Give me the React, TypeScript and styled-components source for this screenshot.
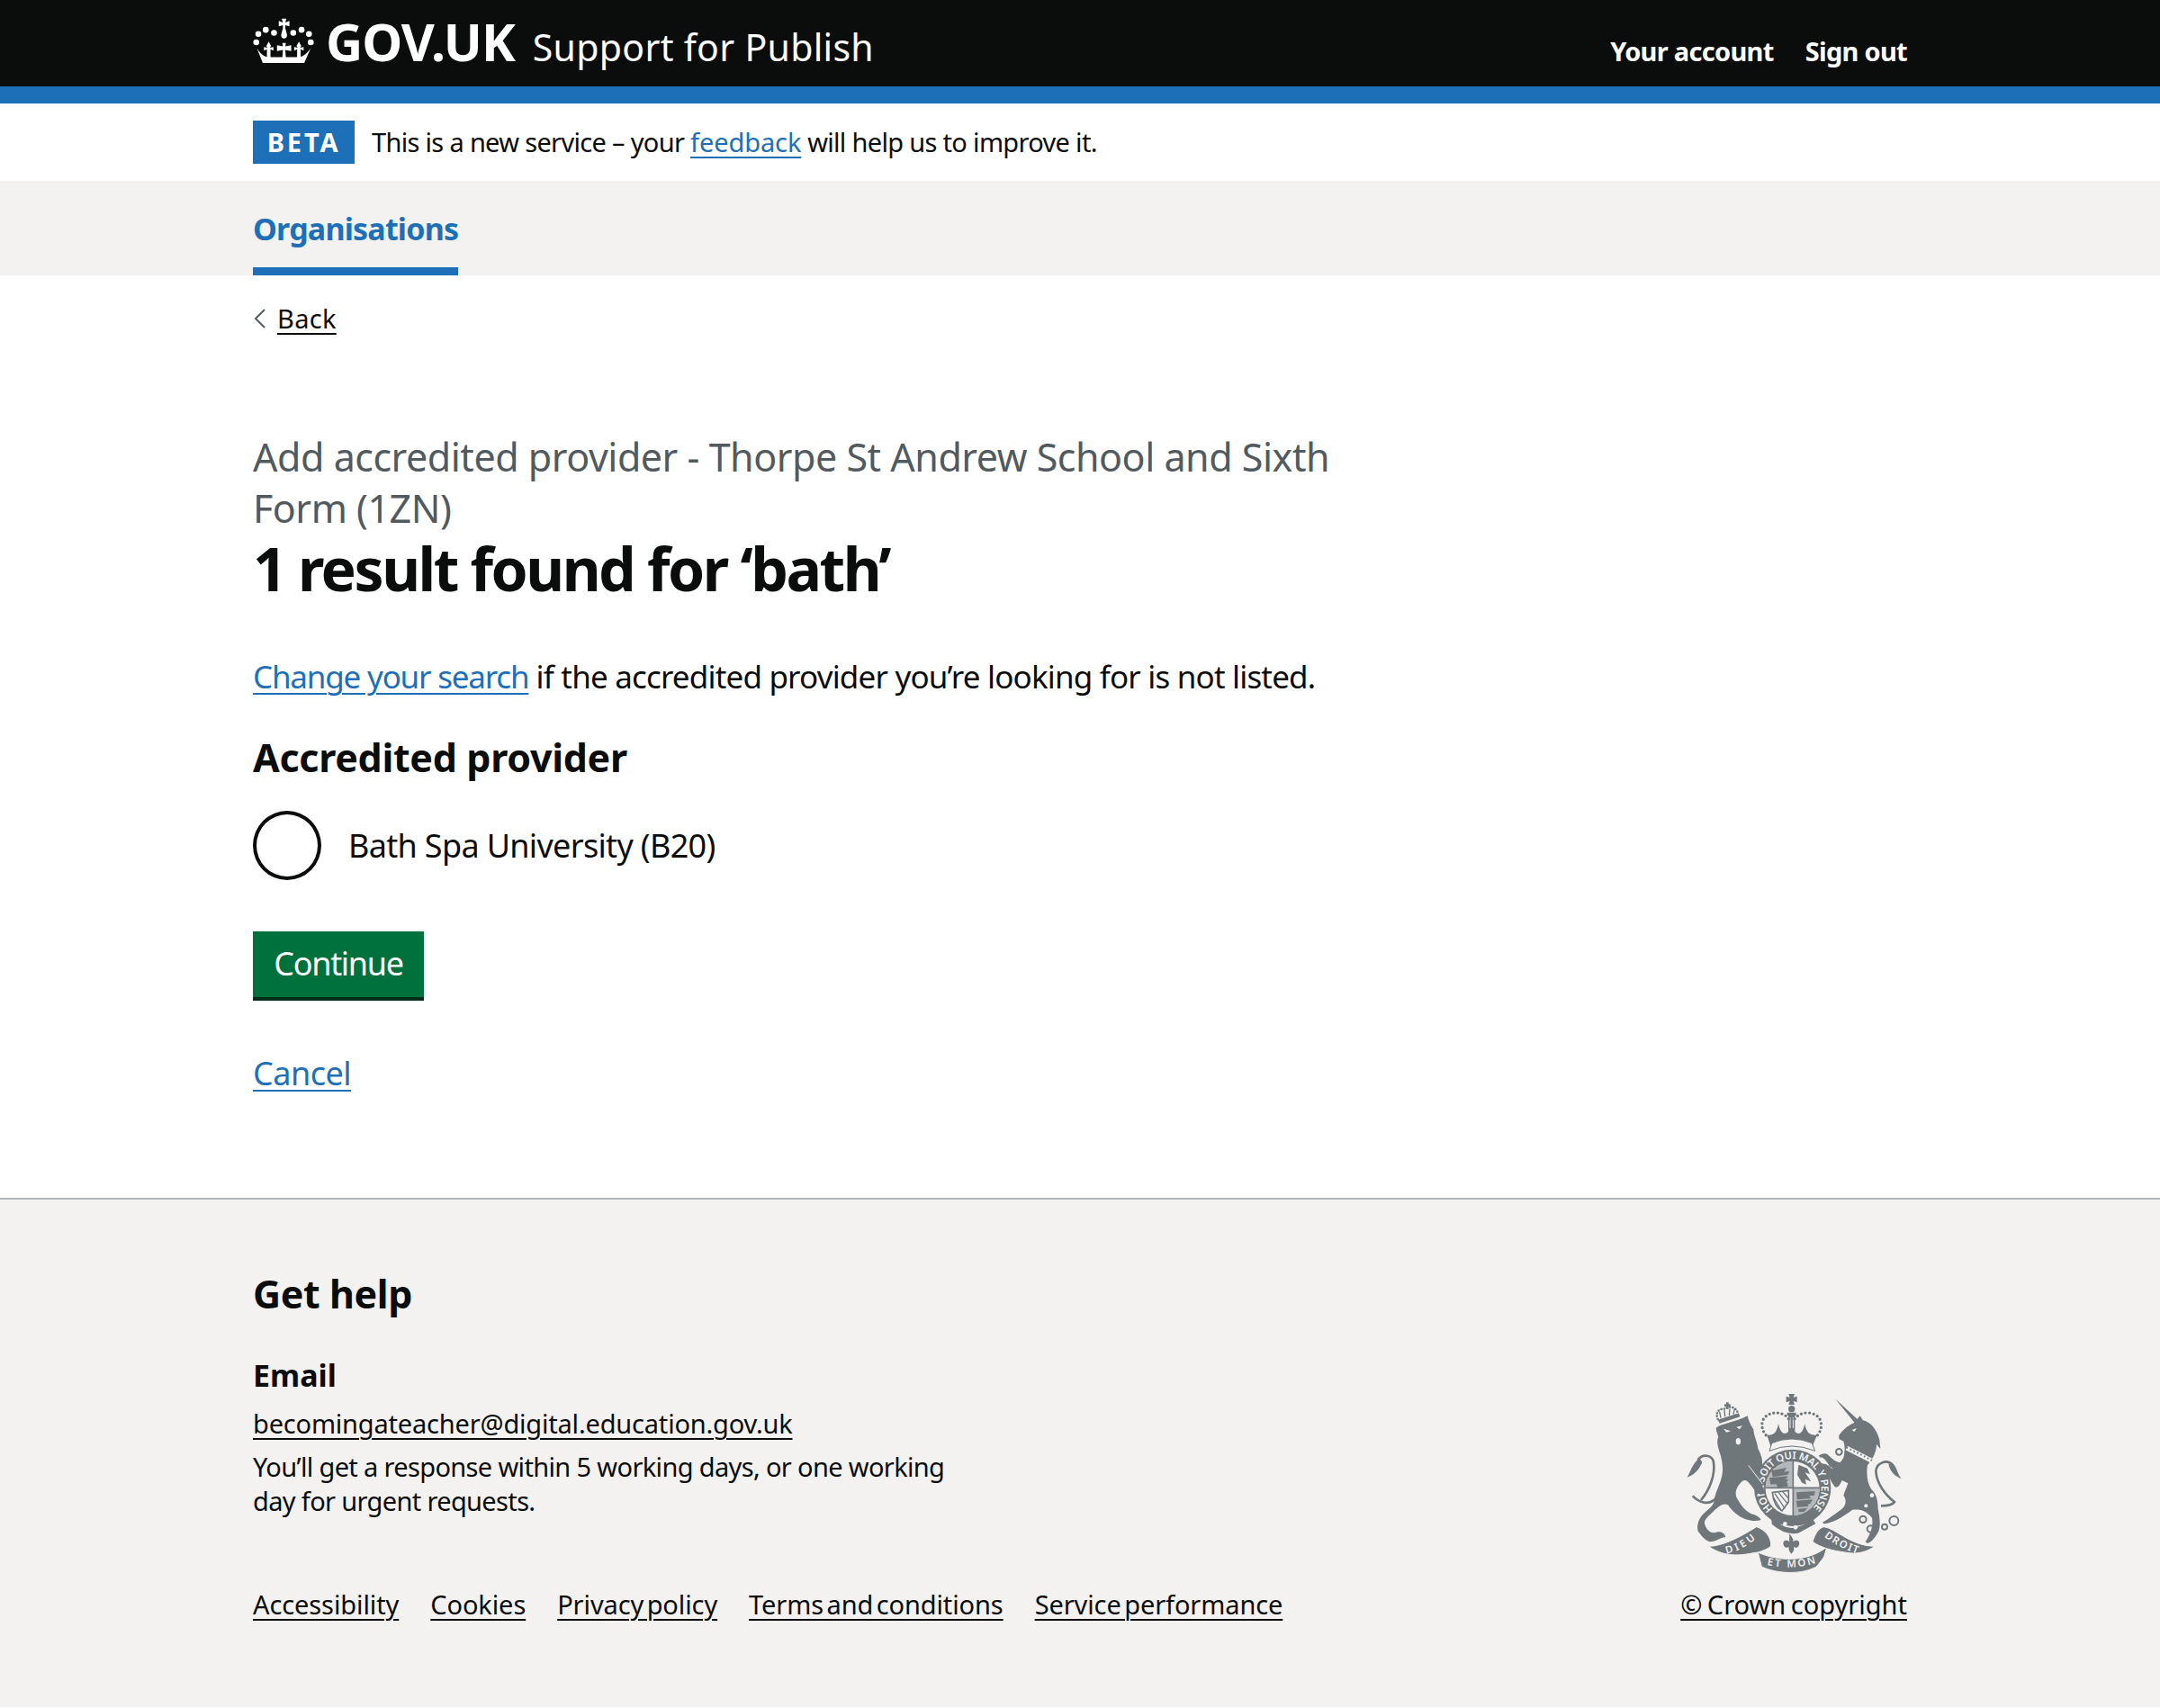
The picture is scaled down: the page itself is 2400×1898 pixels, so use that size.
import styled, { createGlobalStyle } from 'styled-components';

const GlobalStyle = createGlobalStyle`
    html, body { margin: 0; padding: 0; background: #fff; }
    body {
        font-family: "Noto Sans", "Liberation Sans", Arial, sans-serif;
        color: #0b0c0c;
    }
`;

const Container = styled.div`
    width: 1838px;
    margin: 0 auto;
`;

const Header = styled.header`
    background: #0b0c0c;
    border-bottom: 19px solid #1d70b8;
    height: 96px;
`;
const HeaderRow = styled(Container)`
    display: flex;
    justify-content: space-between;
    height: 96px;
`;
const Brand = styled.a`
    display: flex;
    align-items: flex-start;
    color: #fff;
    text-decoration: none;
`;
const CrownIcon = styled.svg`
    width: 69px;
    height: 50px;
    margin: 20px 12px 0 0;
`;
const Logotype = styled.span`
    font-size: 57px;
    font-weight: 700;
    line-height: 96px;
    letter-spacing: -1px;
    margin-top: -2px;
`;
const ServiceName = styled.span`
    font-size: 41px;
    line-height: 96px;
    letter-spacing: 0.3px;
    margin-left: 20px;
    margin-top: 4px;
`;
const AccountNav = styled.nav`
    display: flex;
    gap: 35px;
    padding-top: 35px;
`;
const AccountLink = styled.a`
    color: #fff;
    font-size: 29px;
    font-weight: 700;
    line-height: 44px;
    letter-spacing: -0.7px;
    text-decoration: none;
`;

const BetaRow = styled(Container)`
    display: flex;
    align-items: center;
    gap: 19px;
    height: 86px;
`;
const BetaTag = styled.strong`
    width: 113px;
    height: 48px;
    background: #1d70b8;
    color: #fff;
    font-size: 29px;
    font-weight: 700;
    line-height: 48px;
    letter-spacing: 2.8px;
    text-align: center;
`;
const BetaText = styled.span`
    font-size: 29px;
    line-height: 44px;
    letter-spacing: -0.68px;
`;
const BlueLink = styled.a`
    color: #1d70b8;
    text-decoration: underline;
    text-decoration-thickness: 2px;
    text-underline-offset: 5px;
`;
const FeedbackLink = styled(BlueLink)`
    letter-spacing: -0.1px;
`;
const SearchLink = styled(BlueLink)`
    letter-spacing: -1.2px;
`;

const SubNav = styled.nav`
    background: #f3f2f1;
    height: 105px;
`;
const SubNavItem = styled.a`
    display: inline-block;
    box-sizing: border-box;
    height: 105px;
    padding-top: 30px;
    border-bottom: 9px solid #1d70b8;
    color: #1d70b8;
    font-size: 34px;
    font-weight: 700;
    line-height: 46px;
    letter-spacing: -0.8px;
    text-decoration: none;
`;

const BackLink = styled.a`
    display: inline-flex;
    align-items: center;
    gap: 11px;
    margin-top: 26px;
    color: #0b0c0c;
    font-size: 29px;
    line-height: 44px;
    letter-spacing: 0.3px;
    text-decoration: underline;
    text-decoration-thickness: 2px;
    text-underline-offset: 5px;
`;
const BackChevron = styled.svg`
    width: 16px;
    height: 24px;
`;
const Caption = styled.span`
    display: block;
    width: 1225px;
    margin-top: 103px;
    color: #505a5f;
    font-size: 43px;
    line-height: 57px;
    letter-spacing: -0.48px;
`;
const Title = styled.h1`
    margin: 0;
    font-size: 66px;
    font-weight: 700;
    line-height: 76px;
    letter-spacing: -2.5px;
`;
const Lead = styled.p`
    margin: 61px 0 0;
    font-size: 35px;
    line-height: 44px;
    letter-spacing: -0.82px;
`;
const SectionTitle = styled.h2`
    margin: 43px 0 0;
    font-size: 43px;
    font-weight: 700;
    line-height: 50px;
    letter-spacing: -0.32px;
`;
const RadioRow = styled.label`
    display: flex;
    align-items: center;
    gap: 30px;
    margin-top: 34px;
    font-size: 36px;
    line-height: 77px;
    letter-spacing: -0.67px;
`;
const RadioMark = styled.span`
    box-sizing: border-box;
    width: 76px;
    height: 77px;
    border: 4px solid #0b0c0c;
    border-radius: 50%;
`;
const ContinueButton = styled.button`
    display: block;
    box-sizing: border-box;
    width: 190px;
    height: 77px;
    margin-top: 57px;
    padding: 0 0 2px;
    border: 0;
    border-bottom: 4px solid #002d18;
    background: #00703c;
    color: #fff;
    font-family: inherit;
    font-size: 36px;
    line-height: 44px;
    letter-spacing: -1.3px;
`;
const CancelWrap = styled.p`
    margin: 59px 0 0;
    font-size: 36px;
    line-height: 44px;
    letter-spacing: -0.5px;
`;

const Footer = styled.footer`
    box-sizing: border-box;
    height: 566px;
    margin-top: 116px;
    padding-top: 80px;
    border-top: 2px solid #b1b4b6;
    background: #f3f2f1;
`;
const FooterRow = styled(Container)`
    display: flex;
    justify-content: space-between;
    align-items: flex-end;
`;
const FooterHeading = styled.h2`
    margin: 0;
    font-size: 43px;
    font-weight: 700;
    line-height: 50px;
    letter-spacing: -0.4px;
`;
const FooterSubheading = styled.h3`
    margin: 45px 0 0;
    font-size: 34px;
    font-weight: 700;
    line-height: 40px;
`;
const DarkLink = styled.a`
    color: #0b0c0c;
    font-size: 29px;
    line-height: 38px;
    text-decoration: underline;
    text-decoration-thickness: 2px;
    text-underline-offset: 5px;
`;
const FooterLink = styled(DarkLink)`
    letter-spacing: -0.1px;
    word-spacing: -4px;
`;
const CopyrightLink = styled(DarkLink)`
    word-spacing: -2px;
`;
const EmailLine = styled.div`
    margin-top: 15px;
    height: 38px;
    line-height: 38px;
    letter-spacing: -0.19px;
`;
const FooterText = styled.p`
    width: 790px;
    margin: 10px 0 0;
    font-size: 29px;
    line-height: 38px;
    letter-spacing: -0.65px;
`;
const FooterLinks = styled.div`
    display: flex;
    gap: 35px;
    margin-top: 77px;
    line-height: 38px;
`;
const Licence = styled.div`
    display: flex;
    flex-direction: column;
    align-items: flex-end;
    line-height: 38px;
`;
const CrestIcon = styled.svg`
    width: 245px;
    height: 205px;
    margin: 0 4px 14px 0;
`;

function Crown() {
    const dots = [[35, 82], [60, 68], [88, 78], [153, 78], [181, 68], [206, 82], [28, 110], [212, 110]];
    return (
        <CrownIcon viewBox="18 28 207 152" fill="#fff">
            {dots.map(([cx, cy]) => <circle key={`${cx}-${cy}`} cx={cx} cy={cy} r="10" />)}
            <path d="M114 30H130L126 43L140 38V56L126 52V62L132 85A10 12 0 1 1 112 85L118 62V52L104 56V38L118 43Z" />
            <path d="M30 130L50 180H190L212 130C195 155 180 160 170 160H70C60 160 45 155 30 130Z" />
            <path d="M70 108L78 122L74 128L86 126V138L76 134V165H64V134L54 138V126L66 128L62 122Z" />
            <path d="M172 108L180 122L176 128L188 126V138L178 134V165H166V134L156 138V126L168 128L164 122Z" />
            <path d="M116 112H128L126 124L146 120V140L126 136L128 165H116L118 136L98 140V120L118 124Z" />
        </CrownIcon>
    );
}

const crestColor = '#6f777b';
const crestBg = '#f3f2f1';
const crestMid = '#b4b8ba';

function Crest() {
    return (
        <CrestIcon viewBox="0 0 735 615" fill={crestColor}>
            <defs>
                <path id="garter" d="M300 395A96 96 0 1 1 430 395" />
                <path id="mottoLeft" d="M145 545Q195 535 243 495" />
                <path id="mottoMiddle" d="M280 582Q365 600 445 575" />
                <path id="mottoRight" d="M470 488Q520 525 578 543" />
            </defs>

            {/* crown */}
            <path d="M352 12h20l-4 12 12-4v20l-12-4 4 12h-20l4-12-12 4V20l12 4z" />
            <circle cx="362" cy="62" r="11" />
            <path d="M347 74h30v10h-30zM351 84h22v60h-22z" />
            <path d="M357 90v36M367 90v36" stroke={crestBg} strokeWidth="3" />
            <path d="M352 95C330 65 280 70 266 100C258 125 270 145 285 158M372 95C395 65 445 70 458 100C466 125 455 145 440 158" fill="none" stroke={crestColor} strokeWidth="10" strokeLinecap="round" strokeDasharray="0 14" />
            <path d="M280 150C298 148 310 150 318 112C326 150 345 155 362 122C380 155 398 150 406 112C414 150 428 148 446 150L432 186Q362 160 292 186Z" />
            <path d="M296 176Q362 148 430 176L440 202Q362 170 288 202Z" fill={crestBg} stroke={crestColor} strokeWidth="3" />

            {/* garter and shield */}
            <circle cx="365" cy="325" r="128" />
            <circle cx="365" cy="327" r="90" fill={crestBg} />
            <path d="M367 327V237A90 90 0 0 0 275 327ZM367 327H455A90 90 0 0 1 367 417Z" fill={crestMid} />
            <text fontFamily="'Noto Sans', sans-serif" fontSize="34" fontWeight="600" fill={crestBg}>
                <textPath href="#garter" textLength="455" lengthAdjust="spacing">HONI SOIT QUI MAL Y PENSE</textPath>
            </text>
            <path d="M367 235v190M274 325h182" stroke={crestColor} strokeWidth="5" />
            <path d="M295 268l50-10-8 14 18-3-6 12-50 8zM288 292l62-6-8 12 10-2-8 12-52 6zM310 312l38-4 2 12-34 4z" />
            <path d="M385 248l30 12 8 20-16-6 20 30-20-8 4 18-14-6-16-26z" />
            <path d="M378 340l62-4-2 14-18 2 8 8-48 4zM378 368l54-4-8 14-8 2 2 6-38 4zM384 396l30-4-10 12-18 2z" />
            <path d="M298 340L352 334L352 372L330 402Q302 385 298 340Z" fill={crestBg} stroke={crestColor} strokeWidth="5" />
            <path d="M306 344L340 394M318 340L350 380M332 338L352 360M302 358L326 398" stroke={crestColor} strokeWidth="4" />
            <path d="M295 425L330 450Q372 475 432 428L442 445L384 476Q340 484 296 446Z" />
            <circle cx="340" cy="445" r="7" fill={crestBg} />
            <circle cx="375" cy="457" r="7" fill={crestBg} />

            {/* lion */}
            <path d="M110 125C130 110 180 105 215 85C218 100 225 115 235 130C235 150 248 170 250 195C262 215 268 240 262 255C258 265 252 280 256 298L275 345L255 345C240 340 235 325 225 315C215 300 205 295 195 305C180 320 170 340 180 360C195 385 205 400 225 410C240 415 255 420 260 432C245 438 225 435 205 428C185 420 165 405 150 382C135 375 120 385 100 405C85 420 70 430 72 445C80 470 95 480 115 472C125 470 140 475 142 490C125 490 110 505 90 505C70 500 60 480 50 470C45 450 52 430 65 415C85 395 105 385 105 360C110 335 125 310 130 285C135 260 130 235 125 215C118 195 110 170 118 155C115 145 110 135 110 125Z" />
            <path d="M218 250L265 312" stroke={crestBg} strokeWidth="3" />
            <path d="M135 128l24 8-14 4zM178 122l20-4-10 12z" fill={crestBg} />
            <ellipse cx="184" cy="170" rx="8" ry="11" fill={crestBg} />
            <path d="M110 360C85 385 55 375 32 352M60 366C90 330 108 280 102 240C98 215 65 210 50 232" fill="none" stroke={crestColor} strokeWidth="8" />
            <path d="M55 226C32 243 27 268 14 290C36 282 52 268 64 240Z" />
            <path d="M116 96C106 72 122 60 140 62C150 52 176 52 184 78" fill="none" stroke={crestColor} strokeWidth="8" strokeLinecap="round" strokeDasharray="0 10" />
            <path d="M126 92L122 72M140 88L138 66M154 84L156 62M168 80L172 62" stroke={crestColor} strokeWidth="4" />
            <path d="M116 98L186 76L190 88L122 110ZM144 40h8v6h6v8h-6v8h-8v-8h-6v-8h6z" />

            {/* unicorn */}
            <path d="M507 28L585 100L572 108Z" />
            <path d="M535 240C510 245 495 225 480 212C470 208 460 212 452 218L458 224C470 222 480 240 490 255L530 270Z" />
            <path d="M520 150C530 135 545 120 570 108L590 85L600 100C625 105 645 130 655 165L658 195L645 180C645 205 635 225 615 250C610 280 615 310 628 330C645 345 650 370 650 395C655 420 660 445 652 470C640 490 630 505 615 510L608 505C625 480 635 450 630 425C610 400 590 395 565 398C540 415 510 440 470 445L465 440C490 425 510 410 530 395C545 380 545 365 535 350C540 335 545 325 550 310L530 300C520 325 510 325 505 320C490 300 480 270 465 260L450 250C465 240 480 245 495 260C510 260 525 240 535 225C540 205 540 185 535 170L520 162Z" />
            <path d="M545 192L635 238" fill="none" stroke={crestBg} strokeWidth="15" />
            <path d="M545 190L635 236" fill="none" stroke={crestColor} strokeWidth="6" strokeDasharray="5 8" />
            <path d="M563 132l16-6-8 12z" fill={crestBg} />
            <circle cx="630" cy="350" r="7" fill={crestBg} />
            <circle cx="610" cy="385" r="6" fill={crestBg} />
            <circle cx="640" cy="312" r="8" fill={crestBg} />
            <g fill="none" stroke={crestColor} strokeWidth="6">
                <circle cx="600" cy="430" r="11" />
                <circle cx="625" cy="462" r="11" />
                <circle cx="672" cy="455" r="9" />
                <circle cx="703" cy="435" r="15" />
                <circle cx="520" cy="205" r="10" />
                <circle cx="508" cy="285" r="10" />
                <path d="M660 385C685 385 700 380 705 372C675 350 645 310 643 270C645 240 680 228 700 250" strokeWidth="8" />
            </g>
            <path d="M695 240C715 255 712 275 728 295C705 285 690 270 685 245Z" />

            {/* motto */}
            <path d="M355 477c8 14 14 16 12 28 12-10 24-2 20 10-4 12-14 10-18 6 2 8 2 14-8 24-8-10-10-16-8-24-4 4-14 6-18-6-4-12 8-20 20-10-2-12 0-14 0-28z" />
            <g stroke={crestBg} strokeWidth="3">
                <path d="M85 520C130 520 190 490 245 455C275 465 295 490 293 520C280 530 265 535 250 540C210 545 150 565 85 520Z" />
                <path d="M250 540C290 560 400 585 480 522L470 555C455 575 445 590 440 590C400 612 320 615 262 588Z" />
                <path d="M432 505C440 480 450 460 470 455C510 460 560 520 640 520C610 540 580 548 540 540C500 535 460 525 432 505Z" />
            </g>
            <g fontFamily="'Noto Sans', sans-serif" fontSize="34" fontWeight="600" fill={crestBg}>
                <text><textPath href="#mottoLeft" textLength="110" lengthAdjust="spacing">DIEU</textPath></text>
                <text><textPath href="#mottoMiddle" textLength="165" lengthAdjust="spacing">ET MON</textPath></text>
                <text><textPath href="#mottoRight" textLength="125" lengthAdjust="spacing">DROIT</textPath></text>
            </g>
        </CrestIcon>
    );
}

export default function App() {
    return (
        <>
            <GlobalStyle />
            <Header>
                <HeaderRow>
                    <Brand href="#">
                        <Crown />
                        <Logotype>GOV.UK</Logotype>
                        <ServiceName>Support for Publish</ServiceName>
                    </Brand>
                    <AccountNav>
                        <AccountLink href="#">Your account</AccountLink>
                        <AccountLink href="#">Sign out</AccountLink>
                    </AccountNav>
                </HeaderRow>
            </Header>
            <BetaRow>
                <BetaTag>BETA</BetaTag>
                <BetaText>This is a new service – your <FeedbackLink href="#">feedback</FeedbackLink> will help us to improve it.</BetaText>
            </BetaRow>
            <SubNav>
                <Container>
                    <SubNavItem href="#">Organisations</SubNavItem>
                </Container>
            </SubNav>
            <Container as="main">
                <BackLink href="#">
                    <BackChevron viewBox="0 0 16 24" fill="none" stroke="#505a5f" strokeWidth="2">
                        <path d="M13 2L3 12l10 10" />
                    </BackChevron>
                    Back
                </BackLink>
                <Caption>Add accredited provider - Thorpe St Andrew School and Sixth Form (1ZN)</Caption>
                <Title>1 result found for ‘bath’</Title>
                <Lead><SearchLink href="#">Change your search</SearchLink> if the accredited provider you’re looking for is not listed.</Lead>
                <SectionTitle>Accredited provider</SectionTitle>
                <RadioRow>
                    <RadioMark />
                    Bath Spa University (B20)
                </RadioRow>
                <ContinueButton>Continue</ContinueButton>
                <CancelWrap><BlueLink href="#">Cancel</BlueLink></CancelWrap>
            </Container>
            <Footer>
                <FooterRow>
                    <div>
                        <FooterHeading>Get help</FooterHeading>
                        <FooterSubheading>Email</FooterSubheading>
                        <EmailLine><DarkLink href="#">becomingateacher@digital.education.gov.uk</DarkLink></EmailLine>
                        <FooterText>You’ll get a response within 5 working days, or one working day for urgent requests.</FooterText>
                        <FooterLinks>
                            <FooterLink href="#">Accessibility</FooterLink>
                            <FooterLink href="#">Cookies</FooterLink>
                            <FooterLink href="#">Privacy policy</FooterLink>
                            <FooterLink href="#">Terms and conditions</FooterLink>
                            <FooterLink href="#">Service performance</FooterLink>
                        </FooterLinks>
                    </div>
                    <Licence>
                        <Crest />
                        <CopyrightLink href="#">© Crown copyright</CopyrightLink>
                    </Licence>
                </FooterRow>
            </Footer>
        </>
    );
}
